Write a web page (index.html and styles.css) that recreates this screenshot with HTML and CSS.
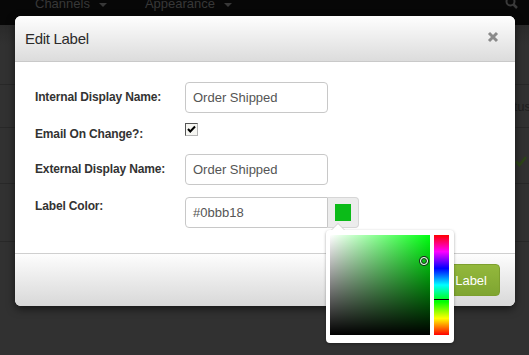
FILE: index.html
```
<!DOCTYPE html>
<html>
<head>
<meta charset="utf-8">
<link rel="stylesheet" href="styles.css">
</head>
<body>
<div class="page">
  <div class="navbar">
    <span class="nav-item">Channels <span class="caret"></span></span>
    <span class="nav-item">Appearance <span class="caret"></span></span>
    <span class="nav-spacer"></span>
    <svg class="nav-search" width="14" height="14" viewBox="0 0 14 14"><circle cx="5.5" cy="1.5" r="4" fill="none" stroke="#3a3a3a" stroke-width="2"/><path d="M8.5 4.5 L12 8" stroke="#3a3a3a" stroke-width="2.5"/></svg>
  </div>
  <div class="content">
    <div class="row row-a"></div>
    <div class="row row-b"><span class="cell-right">Status</span></div>
    <div class="row row-c"><span class="cell-check"><svg width="12" height="12" viewBox="0 0 12 12"><path d="M1 6.5 L4.5 10 L11 2" fill="none" stroke="#2c4418" stroke-width="2.6"/></svg></span></div>
    <div class="row row-d"></div>
    <div class="row row-e"></div>
  </div>
</div>

<div class="modal">
  <div class="modal-header">
    <h3 class="modal-title">Edit Label</h3>
    <svg class="close" width="12" height="12" viewBox="0 0 12 12"><path d="M2 2 L10 10 M10 2 L2 10" stroke="#8a8a8a" stroke-width="3"/></svg>
  </div>
  <div class="modal-body">
    <div class="form-row center">
      <label class="form-label">Internal Display Name:</label>
      <div class="input">Order Shipped</div>
    </div>
    <div class="form-row top row-check">
      <label class="form-label lbl-check">Email On Change?:</label>
      <span class="checkbox"><svg width="11" height="11" viewBox="0 0 11 11"><path d="M2 5 L4.3 7.5 L9 2.5" fill="none" stroke="#000" stroke-width="2"/></svg></span>
    </div>
    <div class="form-row center row-ext">
      <label class="form-label">External Display Name:</label>
      <div class="input">Order Shipped</div>
    </div>
    <div class="form-row top">
      <label class="form-label lbl-color">Label Color:</label>
      <div class="input-group">
        <div class="input input-left">#0bbb18</div>
        <div class="addon"><span class="swatch"></span></div>
      </div>
    </div>
  </div>
  <div class="modal-footer">
    <button class="btn-save">Save Label</button>
  </div>
</div>

<div class="picker">
  <div class="sat">
    <span class="sat-cursor"></span>
  </div>
  <div class="hue">
    <span class="hue-marker"></span>
  </div>
</div>
</body>
</html>
```

FILE: styles.css
```
html, body {
  margin: 0;
  padding: 0;
}
body {
  width: 529px;
  height: 355px;
  overflow: hidden;
  background: #313131;
  font-family: "Liberation Sans", Arial, sans-serif;
  position: relative;
}
.page {
  display: flex;
  flex-direction: column;
  height: 355px;
}
.navbar {
  height: 25px;
  background: #070707;
  display: flex;
  align-items: flex-start;
  padding-left: 35px;
  padding-right: 10px;
  gap: 38px;
  box-sizing: border-box;
}
.nav-item {
  color: #383838;
  font-size: 13px;
  line-height: 13px;
  margin-top: -3px;
  display: flex;
  align-items: center;
  gap: 9px;
}
.caret {
  display: inline-block;
  width: 0;
  height: 0;
  border-left: 4px solid transparent;
  border-right: 4px solid transparent;
  border-top: 4px solid #383838;
  margin-top: 2px;
}
.nav-spacer { flex: 1; }
.nav-search { margin-top: 0; }
.content {
  flex: 1;
  display: flex;
  flex-direction: column;
  background: linear-gradient(#2a2a2a, #313131 20px);
}
.row {
  border-top: 1px solid #282828;
  display: flex;
  align-items: center;
  justify-content: flex-end;
  box-sizing: border-box;
}
.row-a { height: 59px; border-top: none; }
.row-b { height: 43px; }
.row-c { height: 56px; }
.row-d { height: 58px; }
.row-e { flex: 1; }
.cell-right {
  color: #1e1e1e;
  font-size: 13px;
  margin-right: -2px;
  align-self: flex-start;
  padding-top: 14px;
}
.cell-check {
  align-self: flex-start;
  margin-right: 2px;
  padding-top: 25px;
}

.modal {
  position: absolute;
  left: 15px;
  top: 16px;
  width: 500px;
  border-radius: 6px;
  background: #fff;
  box-shadow: 0 3px 9px rgba(0,0,0,0.55);
  overflow: hidden;
}
.modal-header {
  height: 46px;
  box-sizing: border-box;
  border-bottom: 1px solid #c9c9c9;
  background: linear-gradient(#fefefe, #dcdcdc);
  display: flex;
  align-items: center;
  justify-content: space-between;
  padding: 0 16px 1px 10px;
}
.modal-title {
  margin: 0;
  font-weight: normal;
  font-size: 15px;
  letter-spacing: -0.3px;
  color: #2b2b2b;
}
.close { margin-top: -2px; }
.modal-body {
  padding: 20px 20px 25px 20px;
  height: 191px;
  box-sizing: border-box;
}
.form-row {
  display: flex;
  margin-bottom: 10px;
}
.form-row.center { align-items: center; }
.form-row.top { align-items: flex-start; }
.row-check { height: 21px; }
.row-ext { margin-bottom: 12px; }
.form-label {
  width: 150px;
  flex: none;
  font-weight: bold;
  font-size: 12px;
  color: #333;
  line-height: 15px;
  letter-spacing: -0.15px;
}
.lbl-check { padding-top: 4px; }
.lbl-color { padding-top: 2px; }
.input {
  width: 143px;
  height: 31px;
  box-sizing: border-box;
  border: 1px solid #c8c8c8;
  border-radius: 4px;
  padding: 0 7px;
  font-size: 13px;
  line-height: 29px;
  color: #555;
  background: #fff;
}
.checkbox {
  width: 13px;
  height: 13px;
  box-sizing: border-box;
  border-top: 1px solid #555;
  border-left: 1px solid #555;
  border-right: 1px solid #b5b5b5;
  border-bottom: 1px solid #b5b5b5;
  background: #f6f6f2;
  display: flex;
  align-items: center;
  justify-content: center;
}
.input-group {
  display: flex;
}
.input-left {
  border-radius: 4px 0 0 4px;
}
.addon {
  width: 31px;
  height: 31px;
  box-sizing: border-box;
  background: #ececec;
  border: 1px solid #d6d6d6;
  border-left: none;
  border-radius: 0 4px 4px 0;
  display: flex;
  align-items: center;
  justify-content: center;
}
.swatch {
  width: 16px;
  height: 17px;
  background: #0bbb18;
  margin-left: -1px;
}
.modal-footer {
  height: 53px;
  box-sizing: border-box;
  border-top: 1px solid #cfcfcf;
  background: linear-gradient(#fdfdfd, #d8d8d8);
  display: flex;
  justify-content: flex-end;
  align-items: flex-start;
  padding: 10px 15px 0 0;
}
.btn-save {
  height: 32px;
  padding: 0 12px;
  border: 1px solid #7d9f2e;
  border-radius: 4px;
  background: linear-gradient(#93b83c, #7fa531);
  color: #fff;
  font-family: "Liberation Sans", Arial, sans-serif;
  font-size: 13px;
}

.picker {
  position: absolute;
  left: 326px;
  top: 230px;
  width: 128px;
  height: 113px;
  box-sizing: border-box;
  background: #fff;
  border-radius: 4px;
  box-shadow: 0 1px 3px rgba(0,0,0,0.35);
  display: flex;
  gap: 4px;
  padding: 5px 5px 0 4px;
}
.picker::before {
  content: "";
  position: absolute;
  left: 5px;
  top: -7px;
  border-left: 7px solid transparent;
  border-right: 7px solid transparent;
  border-bottom: 7px solid #cfcfcf;
}
.picker::after {
  content: "";
  position: absolute;
  left: 6px;
  top: -6px;
  border-left: 6px solid transparent;
  border-right: 6px solid transparent;
  border-bottom: 6px solid #fff;
}
.sat {
  width: 100px;
  height: 100px;
  position: relative;
  background:
    linear-gradient(to top, #000, rgba(0,0,0,0)),
    linear-gradient(to right, #fff, #00ff11);
}
.sat-cursor {
  position: absolute;
  left: 90px;
  top: 22px;
  width: 6px;
  height: 6px;
  border-radius: 50%;
  border: 1px solid #fff;
  box-shadow: 0 0 0 1px #222, inset 0 0 0 1px #222;
}
.hue {
  width: 15px;
  height: 100px;
  position: relative;
  background: linear-gradient(to bottom, #f00 0%, #f0f 16.67%, #00f 33.33%, #0ff 50%, #0f0 66.67%, #ff0 83.33%, #f00 100%);
}
.hue-marker {
  position: absolute;
  left: 0;
  top: 64px;
  width: 15px;
  height: 1px;
  background: #000;
}
```
